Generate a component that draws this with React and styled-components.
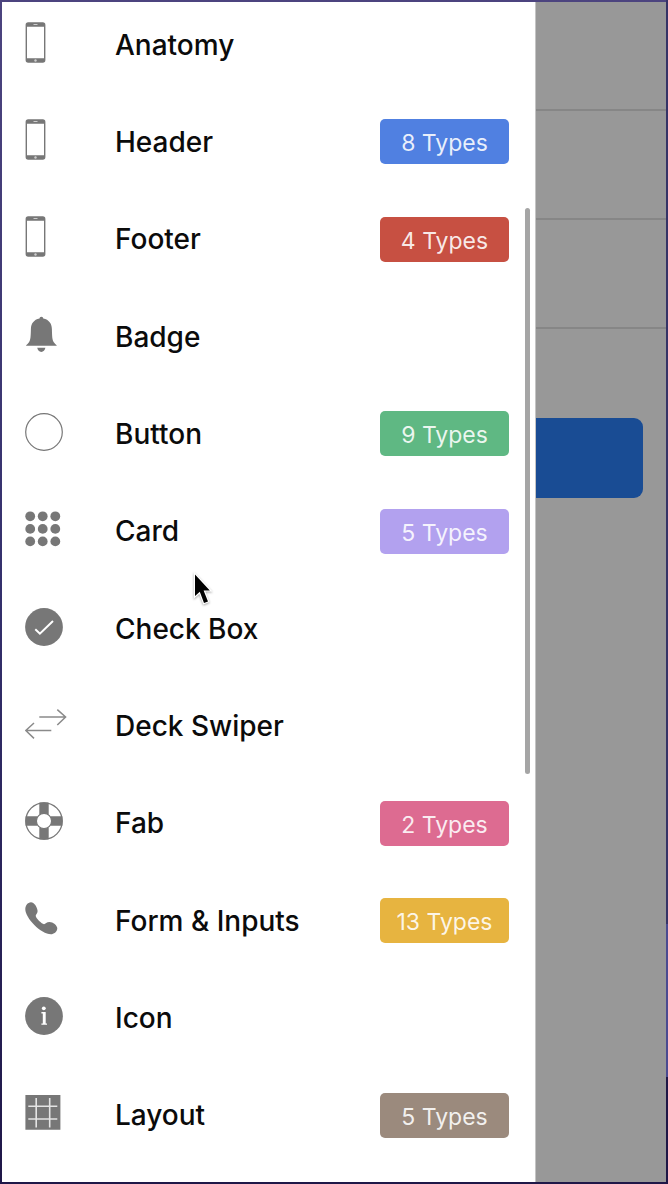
import React from "react";
import styled, { createGlobalStyle } from "styled-components";

const GlobalStyle = createGlobalStyle`
  *, *::before, *::after { box-sizing: border-box; }
  body { margin: 0; font-family: Inter, "Liberation Sans", sans-serif; }
`;

const Frame = styled.div`
  display: flex;
  min-height: 100vh;
  padding: 2px;
  background:
    linear-gradient(#353366 0 78%, #4a4a90 78% 91%, #1e1645 91%) right / 2px 100% no-repeat,
    linear-gradient(#4c447f, #34306c 50%, #1f1748);
`;

const Drawer = styled.aside`
  position: relative;
  display: flex;
  flex: 1;
  min-width: 0;
  overflow: hidden;
  background: #fff;
  border-right: 1px solid #c4c4c4;
`;

const Nav = styled.nav`
  display: flex;
  flex: 1;
  margin-top: -6px;
  padding-bottom: 18px;
`;

const List = styled.ul`
  display: flex;
  flex: 1;
  flex-direction: column;
  margin: 0;
  padding: 0;
  list-style: none;
`;

const Item = styled.li`
  display: flex;
  flex: 1 0 96px;
`;

const ItemLink = styled.a`
  display: flex;
  flex: 1;
  align-items: center;
  padding: 0 26px 0 23px;
  color: #0b0b0b;
  text-decoration: none;
`;

const Icon = styled.svg`
  flex: none;
  width: 44px;
  height: 42px;
  margin: 0 46px 4px 0;
  color: #777;
  fill: currentColor;
`;

const Label = styled.span`
  flex: 1;
  font-size: 28px;
  font-weight: 500;
  line-height: 36px;
  white-space: nowrap;
`;

const Badge = styled.span`
  flex: none;
  width: 129px;
  padding-top: 3px;
  border-radius: 5px;
  background: ${(p) => p.$color};
  color: rgba(255, 255, 255, 0.88);
  font-size: 23px;
  line-height: 42px;
  text-align: center;
  white-space: nowrap;
`;

const ScrollThumb = styled.div`
  position: absolute;
  top: 206px;
  right: 5px;
  width: 5px;
  height: 48%;
  border-radius: 3px;
  background: #a5a5a5;
`;

const Pointer = styled.svg`
  position: absolute;
  top: 569px;
  left: 188px;
  width: 28px;
  height: 40px;
  filter: drop-shadow(0 1px 1px rgba(0, 0, 0, 0.35));
`;

const Backdrop = styled.main`
  flex: 0 0 130px;
  background: #989898;
`;

const BackdropRow = styled.div`
  height: 109px;
  border-bottom: 2px solid #868686;
`;

const BackdropButton = styled.button`
  display: block;
  width: calc(100% - 23px);
  height: 80px;
  margin-top: 89px;
  padding: 0;
  border: 0;
  border-radius: 0 9px 9px 0;
  background: #194c94;
`;

const PhoneShape = (
  <>
    <path fillRule="evenodd" d="M3.2 .3H17.8Q20.4 .3 20.4 3V38Q20.4 40.8 17.8 40.8H3.2Q.6 40.8 .6 38V3Q.6 .3 3.2 .3ZM2 4.8V36.2H19V4.8Z" />
    <path d="M8.5 2.5H12.5" stroke="#ccc" strokeWidth="1" />
    <circle cx="10.5" cy="38.5" r="1.2" fill="#ccc" />
  </>
);

const shapes = {
  phone: PhoneShape,
  bell: (
    <>
      <path d="M16.4 2.7C17.6 2.7 18.2 3.5 18.3 4.6C24 5.7 26.8 9.8 26.9 15C27.1 23 27.3 25.6 28.8 28.3C29.5 29.5 31 30.5 31.9 31.8H.9C1.8 30.5 3.3 29.5 4 28.3C5.5 25.6 5.7 23 5.9 15C6 9.8 8.8 5.7 14.5 4.6C14.6 3.5 15.2 2.7 16.4 2.7Z" />
      <path d="M12.2 33.8H20.4C19.8 36.6 18.4 37.9 16.3 37.9C14.2 37.9 12.8 36.6 12.2 33.8Z" />
    </>
  ),
  circle: <circle cx="19" cy="21" r="18.3" fill="none" stroke="currentColor" strokeWidth="1.2" />,
  keypad: [8.3, 20.9, 33.4].map((cy) =>
    [5.2, 17.7, 30.3].map((cx) => <circle key={`${cx}-${cy}`} cx={cx} cy={cy} r="4.9" />)
  ),
  check: (
    <>
      <circle cx="19" cy="21" r="18.9" />
      <path d="M10.3 23.2L14.9 27.6L28 15" fill="none" stroke="#fff" strokeWidth="2" />
    </>
  ),
  swap: (
    <path
      d="M14.3 14H40.4M32.3 6.6L40.6 14L32.3 22M26.3 27.5H.8M9 20L.8 27.5L9 35.4"
      fill="none"
      stroke="#8a8a8a"
      strokeWidth="1.5"
    />
  ),
  buoy: (
    <>
      <path d="M14.3 2.7Q19 1.8 23.7 2.7V14.8Q19 12.2 14.3 14.8ZM14.3 39.3Q19 40.2 23.7 39.3V27.2Q19 29.8 14.3 27.2ZM.7 16.3H12.8Q10.2 21 12.8 25.7H.7Q0 21 .7 16.3ZM37.3 16.3H25.2Q27.8 21 25.2 25.7H37.3Q38 21 37.3 16.3Z" />
      <circle cx="19" cy="21" r="18.2" fill="none" stroke="currentColor" strokeWidth="1.3" />
      <circle cx="19" cy="21" r="7.6" fill="none" stroke="currentColor" strokeWidth="1.2" />
    </>
  ),
  call: (
    <path d="M6 4.3C9 4.3 12.3 9 12.6 13C12.7 15.5 10.8 16.3 10.7 17.8C11 20.5 16.8 26 19 26.2C20.5 26.2 21.5 24 24.5 24C28 24 32.3 27.5 32.3 30.3C32.3 34 28.5 36.3 26 36.3C16 36.3 .3 20 .3 11.3C.3 8 2.5 4.3 6 4.3Z" />
  ),
  info: (
    <>
      <circle cx="19" cy="21" r="18.9" />
      <circle cx="18.8" cy="13.3" r="1.9" fill="#fff" />
      <path d="M16.4 17H20.7V28.4H22V29.8H16.4V28.4H17.8V18.4H16.4Z" fill="#fff" />
    </>
  ),
  grid: (
    <>
      <path d="M.4 3H35.4V37.8H.4Z" />
      <path d="M11.2 6V35.4M24.7 6V35.4M3.3 14.2H32.3M3.3 27H32.3" stroke="#e4e4e4" strokeWidth="1.6" />
    </>
  ),
};

const items = [
  { label: "Anatomy", icon: "phone" },
  { label: "Header", icon: "phone", types: 8, color: "#5080e1" },
  { label: "Footer", icon: "phone", types: 4, color: "#c75042" },
  { label: "Badge", icon: "bell" },
  { label: "Button", icon: "circle", types: 9, color: "#5fb883" },
  { label: "Card", icon: "keypad", types: 5, color: "#b2a1ef" },
  { label: "Check Box", icon: "check" },
  { label: "Deck Swiper", icon: "swap" },
  { label: "Fab", icon: "buoy", types: 2, color: "#dd6b91" },
  { label: "Form & Inputs", icon: "call", types: 13, color: "#e7b440" },
  { label: "Icon", icon: "info" },
  { label: "Layout", icon: "grid", types: 5, color: "#9b8a7d" },
];

export default function App() {
  return (
    <>
      <GlobalStyle />
      <Frame>
        <Drawer>
          <Nav aria-label="Components">
            <List>
              {items.map(({ label, icon, types, color }) => (
                <Item key={label}>
                  <ItemLink href="#">
                    <Icon viewBox="0 0 44 42" aria-hidden="true">{shapes[icon]}</Icon>
                    <Label>{label}</Label>
                    {types && <Badge $color={color}>{types} Types</Badge>}
                  </ItemLink>
                </Item>
              ))}
            </List>
          </Nav>
          <ScrollThumb />
          <Pointer viewBox="0 0 28 40" aria-hidden="true">
            <path
              d="M5 3.5V25L9.8 20.8L14 32L18 30.4L13.6 19.4H19.8Z"
              fill="#000"
              stroke="#fff"
              strokeWidth="2.4"
              paintOrder="stroke"
            />
          </Pointer>
        </Drawer>
        <Backdrop>
          <BackdropRow />
          <BackdropRow />
          <BackdropRow />
          <BackdropButton type="button" aria-label="Open" />
        </Backdrop>
      </Frame>
    </>
  );
}
